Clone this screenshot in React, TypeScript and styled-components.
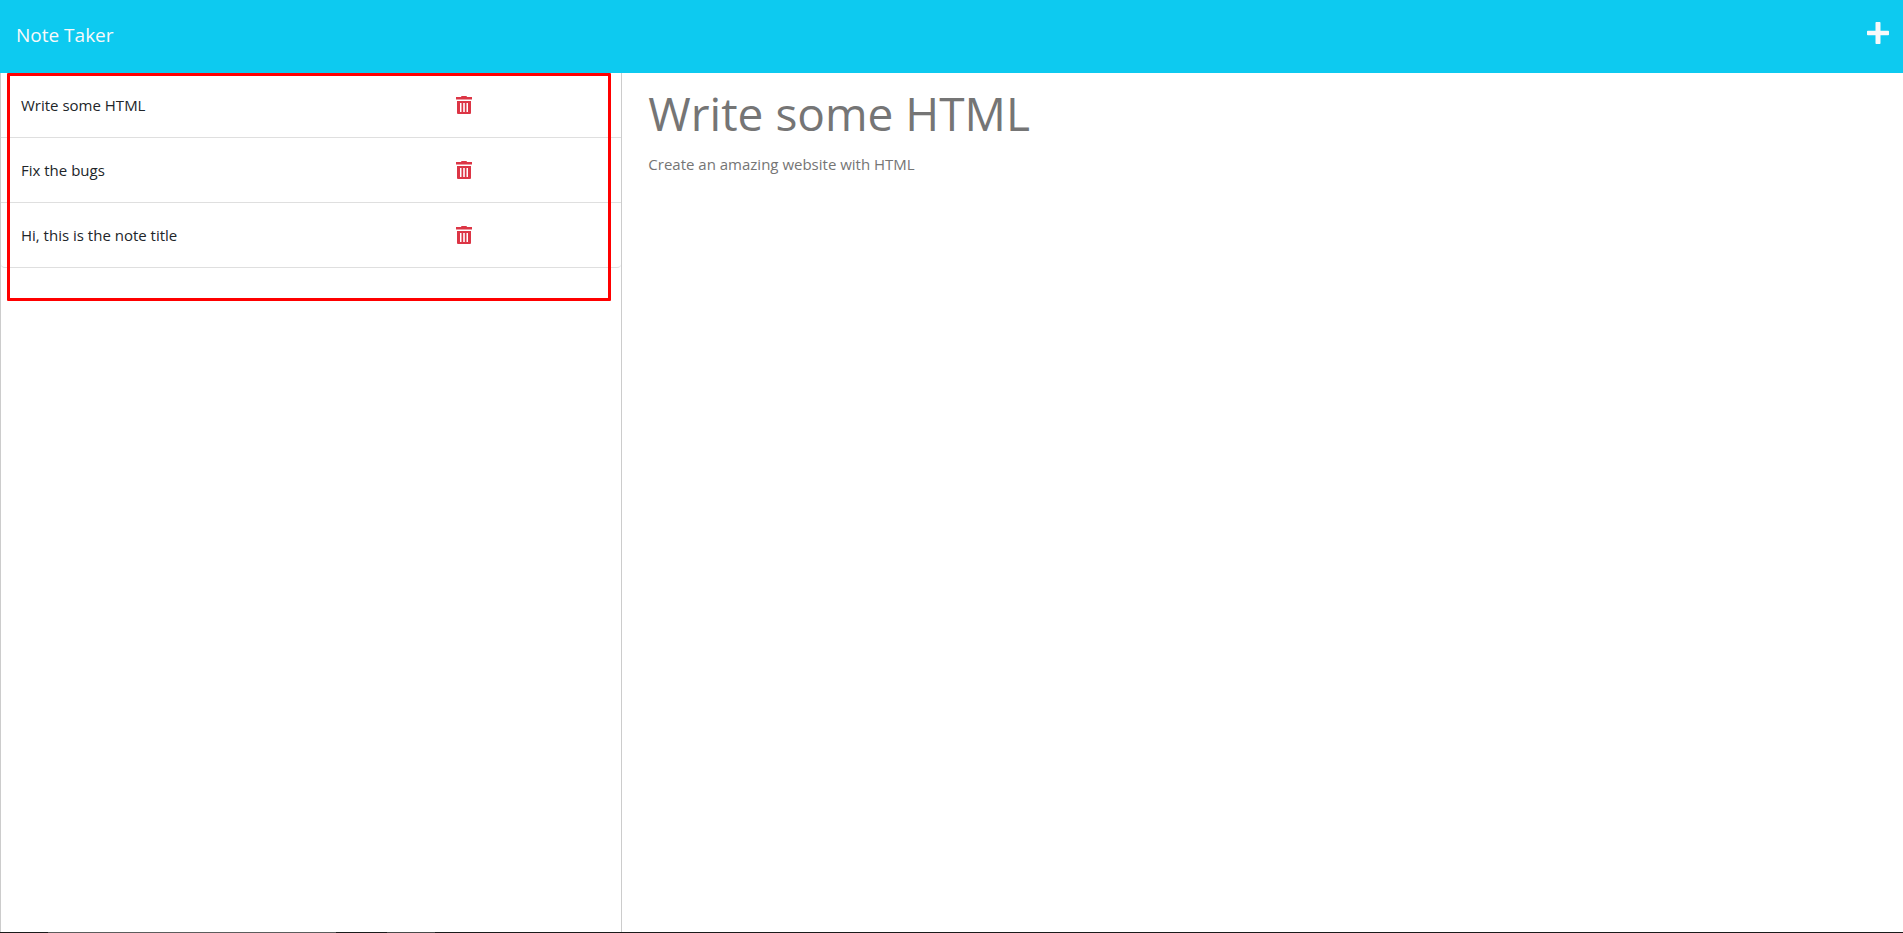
import React, { useState } from 'react';
import styled, { createGlobalStyle } from 'styled-components';

const GlobalStyle = createGlobalStyle`
  *, *::before, *::after { box-sizing: border-box; }
  body {
    margin: 0;
    background: #fff;
    color: #212529;
    font: 15px/24px "Open Sans", "Noto Sans", sans-serif;
  }
`;

const Page = styled.div`
  display: flex;
  flex-direction: column;
  min-height: 100vh;
`;

const Header = styled.header`
  display: flex;
  align-items: flex-start;
  justify-content: space-between;
  height: 73px;
  padding: 20px 14px 0 16px;
  background: #0dcaf0;
`;

const Brand = styled.a`
  color: #f8f9fa;
  font-size: 19px;
  line-height: 30px;
  text-decoration: none;
`;

const IconButton = styled.button`
  display: flex;
  padding: 0;
  border: 0;
  background: none;
  color: ${(p) => p.color};
  cursor: pointer;
`;

const AddButton = styled(IconButton)`
  padding-top: 2px;
`;

const Columns = styled.div`
  display: grid;
  grid-template-columns: 1fr 2fr;
  flex: 1;
`;

const Sidebar = styled.aside`
  position: relative;
  margin-right: 12px;
  border: solid #ccc;
  border-width: 0 1px;
`;

const Highlight = styled.div`
  position: absolute;
  inset: 0 10px auto 6px;
  height: 228px;
  border: 3px solid #f00;
  border-radius: 1px;
  pointer-events: none;
`;

const NoteList = styled.ul`
  margin: 0;
  padding: 0;
  list-style: none;
`;

const NoteRow = styled.li`
  display: grid;
  grid-template-columns: 3fr 1fr;
  align-items: center;
  height: 65px;
  padding: 0 20px;
  border-bottom: 1px solid #dfdfdf;

  &:last-child {
    border-radius: 0 0 4px 4px;
  }
`;

const NoteTitle = styled.span`
  cursor: pointer;
`;

const Note = styled.main`
  padding: 12px 14px 0;
`;

const Heading = styled.h1`
  margin: 0;
  color: #757575;
  font-size: 46px;
  font-weight: 400;
  line-height: 56px;
`;

const Body = styled.p`
  margin: 11px 0 0;
  color: #757575;
`;

const TaskbarEdge = styled.div`
  height: 1px;
  background: linear-gradient(
    to right,
    #1a1a1a 48px, #5c5c5c 48px, #5c5c5c 336px, #1a1a1a 336px,
    #1a1a1a 387px, #4a4a4a 387px, #4a4a4a 435px, #1a1a1a 435px
  );
`;

const TrashIcon = () => (
  <svg width="16" height="18" viewBox="0 0 16 18" fill="currentColor" fillRule="evenodd" aria-hidden="true">
    <path d="M5 1Q5 0 6 0h4q1 0 1 1h5v2.500H0V1zM1 5h14v12q0 1-1 1H2q-1 0-1-1zM4 7v9h1.500V7zM7.200 7v9h1.600V7zM10.500 7v9H12V7z" />
  </svg>
);

const PlusIcon = () => (
  <svg width="22" height="22" viewBox="0 0 22 22" fill="currentColor" aria-hidden="true">
    <path d="M9.300 0h3.400q.8 0 .8.8v7.900h7.700q.8 0 .8.8v3q0 .8-.8.8h-7.700v7.900q0 .8-.8.8H9.300q-.8 0-.8-.8v-7.900H.8q-.8 0-.8-.8v-3q0-.8.8-.8h7.700V.8q0-.8.8-.8z" />
  </svg>
);

const initialNotes = ['Write some HTML', 'Fix the bugs', 'Hi, this is the note title'];

export default function App() {
  const [notes, setNotes] = useState(initialNotes);
  return (
    <Page>
      <GlobalStyle />
      <Header>
        <Brand href="#">Note Taker</Brand>
        <AddButton type="button" color="#f8f9fa" aria-label="New note">
          <PlusIcon />
        </AddButton>
      </Header>
      <Columns>
        <Sidebar>
          <NoteList>
            {notes.map((title) => (
              <NoteRow key={title}>
                <NoteTitle>{title}</NoteTitle>
                <IconButton
                  type="button"
                  color="#dc3545"
                  aria-label={`Delete ${title}`}
                  onClick={() => setNotes(notes.filter((n) => n !== title))}
                >
                  <TrashIcon />
                </IconButton>
              </NoteRow>
            ))}
          </NoteList>
          <Highlight />
        </Sidebar>
        <Note>
          <Heading>Write some HTML</Heading>
          <Body>Create an amazing website with HTML</Body>
        </Note>
      </Columns>
      <TaskbarEdge />
    </Page>
  );
}
